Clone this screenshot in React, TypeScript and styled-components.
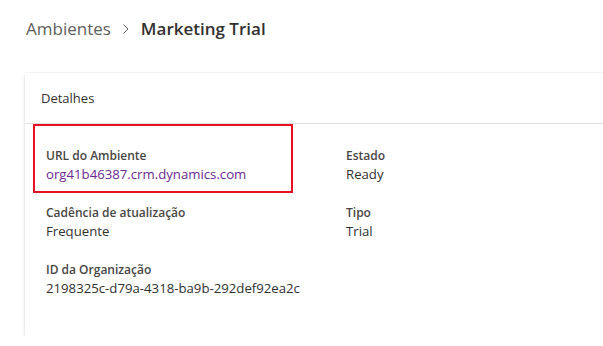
import React from "react";
import styled, { createGlobalStyle } from "styled-components";

const GlobalStyle = createGlobalStyle`
  html, body {
    margin: 0;
    padding: 0;
    background: #ffffff;
    overflow: hidden;
  }
  body {
    font-family: "Open Sans", "Noto Sans", sans-serif;
    color: #323130;
  }
`;

const Page = styled.main`
  padding: 14px 0 0 26px;
`;

const Breadcrumb = styled.nav`
  display: flex;
  align-items: center;
  height: 28px;
  font-size: 17px;
`;

const Crumb = styled.span<{ current?: boolean }>`
  color: ${(p) => (p.current ? "#323130" : "#605e5c")};
  font-weight: ${(p) => (p.current ? 600 : 400)};
`;

const Chevron = styled.svg`
  width: 8px;
  height: 12px;
  margin: 2px 11px 0 11px;
`;

const Card = styled.section`
  margin: 31px 0 0 -1px;
  width: 640px;
  height: 263px;
  background: #fff;
  box-shadow: 0 0 2px rgba(0, 0, 0, 0.12), 0 2px 4px rgba(0, 0, 0, 0.08);
`;

const CardHeader = styled.header`
  height: 50px;
  display: flex;
  align-items: center;
  padding-left: 16px;
  font-size: 13px;
  font-weight: 400;
  border-bottom: 1px solid #e1dfdd;
`;

const Details = styled.div`
  display: grid;
  grid-template-columns: 300px 240px;
  row-gap: 21px;
  padding: 24px 0 0 21px;
`;

const Field = styled.div<{ highlighted?: boolean }>`
  position: relative;
  display: flex;
  flex-direction: column;

  &::before {
    content: "";
    display: ${(p) => (p.highlighted ? "block" : "none")};
    position: absolute;
    left: -13px;
    top: -24px;
    width: 260px;
    height: 69px;
    box-sizing: border-box;
    border: 2.5px solid #e81123;
  }
`;

const Label = styled.span`
  font-size: 12px;
  line-height: 16px;
  font-weight: 600;
  color: #484644;
`;

const Value = styled.span<{ link?: boolean }>`
  font-size: 13.2px;
  line-height: 20px;
  color: ${(p) => (p.link ? "#6b2a8f" : "#323130")};
`;

const fields = [
  { label: "URL do Ambiente", value: "org41b46387.crm.dynamics.com", link: true, highlighted: true },
  { label: "Estado", value: "Ready" },
  { label: "Cadência de atualização", value: "Frequente" },
  { label: "Tipo", value: "Trial" },
  { label: "ID da Organização", value: "2198325c-d79a-4318-ba9b-292def92ea2c" },
];

const App = () => (
  <>
    <GlobalStyle />
    <Page>
      <Breadcrumb>
        <Crumb>Ambientes</Crumb>
        <Chevron viewBox="0 0 8 12">
          <path d="M1.5 1.5l4.5 4.5-4.5 4.5" fill="none" stroke="#605e5c" strokeWidth="1" />
        </Chevron>
        <Crumb current>Marketing Trial</Crumb>
      </Breadcrumb>
      <Card>
        <CardHeader>Detalhes</CardHeader>
        <Details>
          {fields.map((f) => (
            <Field key={f.label} highlighted={f.highlighted}>
              <Label>{f.label}</Label>
              <Value link={f.link}>{f.value}</Value>
            </Field>
          ))}
        </Details>
      </Card>
    </Page>
  </>
);

export default App;
